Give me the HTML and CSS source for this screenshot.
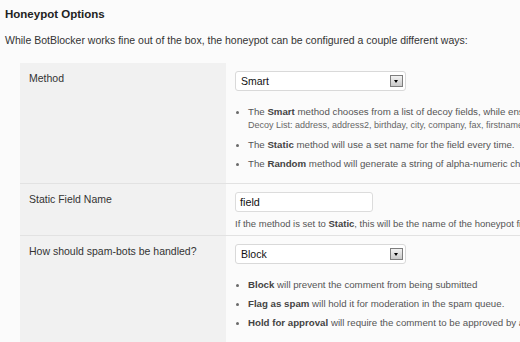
FILE: index.html
```html
<!DOCTYPE html>
<html>
<head>
<meta charset="utf-8">
<link rel="stylesheet" href="styles.css">
</head>
<body>
<h3 class="title">Honeypot Options</h3>
<p class="intro">While BotBlocker works fine out of the box, the honeypot can be configured a couple different ways:</p>
<div class="form">
  <div class="row row-method">
    <div class="label">Method</div>
    <div class="value">
      <div class="select"><span class="sel-text">Smart</span><span class="arrow"></span></div>
      <ul class="notes">
        <li>The <b>Smart</b> method chooses from a list of decoy fields, while ensuring the field name is unique.<br><span class="decoy">Decoy List: address, address2, birthday, city, company, fax, firstname, lastname, phone</span></li>
        <li>The <b>Static</b> method will use a set name for the field every time.</li>
        <li>The <b>Random</b> method will generate a string of alpha-numeric characters.</li>
      </ul>
    </div>
  </div>
  <div class="row row-static">
    <div class="label">Static Field Name</div>
    <div class="value">
      <div class="input">field</div>
      <p class="help">If the method is set to <b>Static</b>, this will be the name of the honeypot field.</p>
    </div>
  </div>
  <div class="row row-handle">
    <div class="label">How should spam-bots be handled?</div>
    <div class="value">
      <div class="select"><span class="sel-text">Block</span><span class="arrow"></span></div>
      <ul class="notes">
        <li><b>Block</b> will prevent the comment from being submitted</li>
        <li><b>Flag as spam</b> will hold it for moderation in the spam queue.</li>
        <li><b>Hold for approval</b> will require the comment to be approved by a moderator.</li>
      </ul>
    </div>
  </div>
</div>
</body>
</html>
```

FILE: styles.css
```css
html, body {
  margin: 0;
  padding: 0;
  background: #fbfbfb;
  overflow: hidden;
}
body {
  padding: 0 5px;
  font-family: "Liberation Sans", Arial, sans-serif;
  color: #333;
  width: 700px;
  height: 342px;
}
.title {
  margin: 0;
  padding-top: 7px;
  font-size: 11.5px;
  line-height: 14px;
  font-weight: bold;
  color: #222;
}
.intro {
  margin: 13px 0 0 0;
  font-size: 10.5px;
  line-height: 13px;
  color: #333;
}
.form {
  margin: 16px 0 0 15px;
}
.row {
  display: flex;
  border-top: 1px solid #e2e2e2;
}
.row:first-child {
  border-top: none;
}
.label {
  width: 197px;
  flex: none;
  background: #f1f1f1;
  padding: 9px 0 0 9px;
  font-size: 10.5px;
  line-height: 13px;
  color: #333;
}
.value {
  flex: 1;
  padding: 8px 0 0 9px;
}
.row-method { height: 120px; }
.row-static { height: 51px; }
.row-handle { height: 120px; }
.row-static .value { padding-top: 8px; }
.select {
  width: 169px;
  height: 18px;
  border: 1px solid #d9d9d9;
  border-radius: 3px;
  background: #fff;
  display: flex;
  align-items: center;
  justify-content: space-between;
  padding: 0 1px 0 5px;
  width: 163px;
}
.sel-text {
  font-size: 10.5px;
  color: #111;
}
.arrow {
  width: 11px;
  height: 10px;
  border: 1px solid #7d7d7d;
  background: linear-gradient(#f2f2f2, #c9c9c9);
  position: relative;
  margin-right: 1px;
}
.arrow::after {
  content: "";
  position: absolute;
  left: 3px;
  top: 4px;
  border-left: 2.5px solid transparent;
  border-right: 2.5px solid transparent;
  border-top: 3px solid #000;
}
.notes {
  list-style: none;
  margin: 14px 0 0 0;
  padding: 0;
  font-size: 9.7px;
  line-height: 13px;
  color: #555;
}
.notes li {
  position: relative;
  padding-left: 13px;
  margin-bottom: 6px;
  white-space: nowrap;
}
.notes li::before {
  content: "";
  position: absolute;
  left: 1px;
  top: 6px;
  width: 3px;
  height: 3px;
  border-radius: 50%;
  background: #6a6a6a;
}
.notes b {
  color: #444;
}
.decoy {
  font-size: 9px;
  line-height: 13px;
  color: #666;
}
.input {
  width: 132px;
  height: 18px;
  border: 1px solid #dcdcdc;
  border-radius: 3px;
  background: #fff;
  padding-left: 4px;
  font-size: 10.8px;
  line-height: 18px;
  color: #111;
}
.help {
  margin: 6px 0 0 0;
  font-size: 9.5px;
  line-height: 12px;
  color: #555;
  white-space: nowrap;
}
.help b { color: #444; }
```
